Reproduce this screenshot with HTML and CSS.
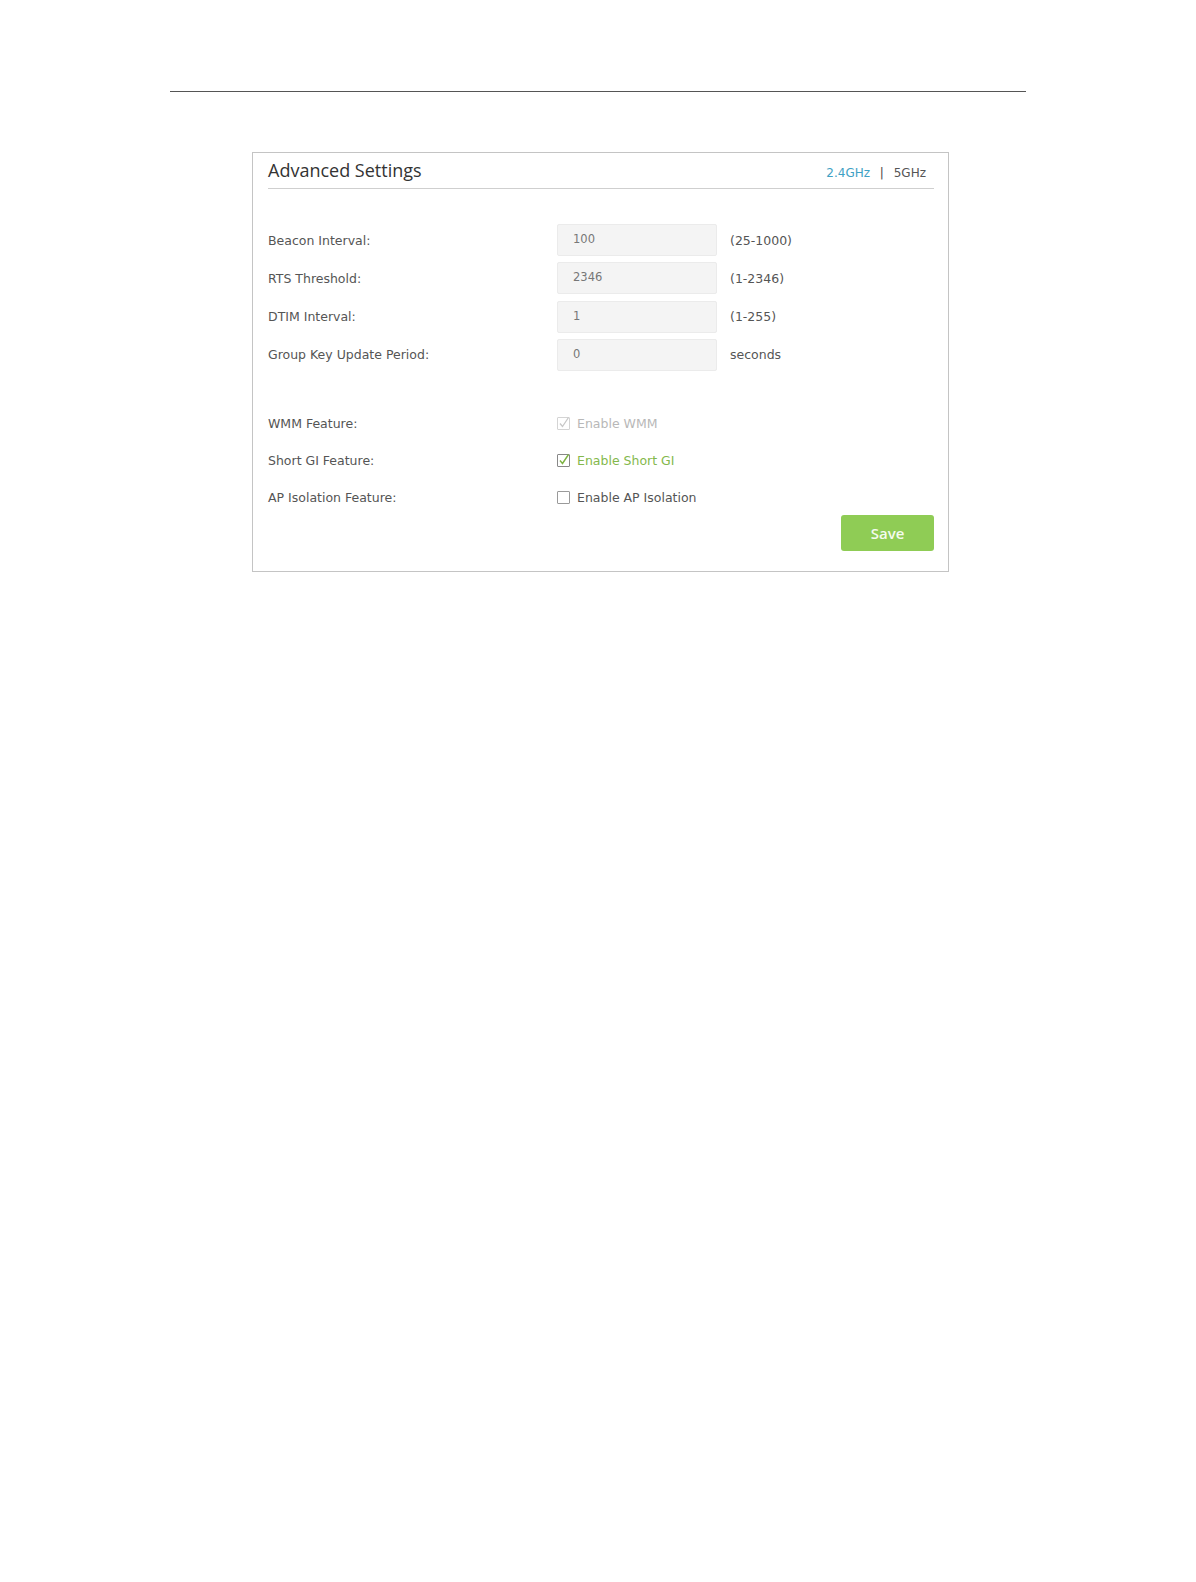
FILE: index.html
```html
<!DOCTYPE html>
<html lang="en">
<head>
    <meta charset="UTF-8">
    <meta name="viewport" content="width=device-width, initial-scale=1.0">
    <title>Advanced Settings</title>
    <link rel="stylesheet" href="styles.css">
</head>
<body>
    <div class="top-rule"></div>

    <div class="panel">
        <div class="panel-head">
            <h2 class="title">Advanced Settings</h2>
            <div class="bands">
                <span class="band active">2.4GHz</span>
                <span class="sep">|</span>
                <span class="band">5GHz</span>
            </div>
        </div>

        <div class="fields">
            <div class="row">
                <label class="label" for="beacon">Beacon Interval:</label>
                <input class="text-input" id="beacon" type="text" value="100">
                <span class="hint">(25-1000)</span>
            </div>
            <div class="row">
                <label class="label" for="rts">RTS Threshold:</label>
                <input class="text-input" id="rts" type="text" value="2346">
                <span class="hint">(1-2346)</span>
            </div>
            <div class="row">
                <label class="label" for="dtim">DTIM Interval:</label>
                <input class="text-input" id="dtim" type="text" value="1">
                <span class="hint">(1-255)</span>
            </div>
            <div class="row">
                <label class="label" for="gkup">Group Key Update Period:</label>
                <input class="text-input" id="gkup" type="text" value="0">
                <span class="hint">seconds</span>
            </div>
        </div>

        <div class="features">
            <div class="check-row">
                <span class="label">WMM Feature:</span>
                <span class="check disabled">
                    <span class="box">
                        <svg viewBox="0 0 13 13" width="13" height="13"><path d="M3 6.5 L5.5 9.5 L11.5 0.5" fill="none" stroke="#c8c8c8" stroke-width="1.3"/></svg>
                    </span>
                    Enable WMM
                </span>
            </div>
            <div class="check-row">
                <span class="label">Short GI Feature:</span>
                <span class="check checked">
                    <span class="box">
                        <svg viewBox="0 0 13 13" width="13" height="13"><path d="M3 6.5 L5.5 9.5 L11.5 0.5" fill="none" stroke="#7db343" stroke-width="1.4"/></svg>
                    </span>
                    Enable Short GI
                </span>
            </div>
            <div class="check-row">
                <span class="label">AP Isolation Feature:</span>
                <span class="check">
                    <span class="box"></span>
                    Enable AP Isolation
                </span>
            </div>
        </div>

        <div class="actions">
            <button class="save-btn">Save</button>
        </div>
    </div>
</body>
</html>
```

FILE: styles.css
```css
body {
    margin: 0;
    background-color: #ffffff;
    font-family: "DejaVu Sans", Verdana, sans-serif;
    color: #555;
}
.top-rule {
    margin: 91px 0 0 170px;
    width: 856px;
    border-top: 1px solid #555;
}
.panel {
    box-sizing: border-box;
    width: 697px;
    height: 420px;
    margin: 60px 0 0 252px;
    padding: 0 14px 0 15px;
    border: 1px solid #c4c4c4;
}
.panel-head {
    display: flex;
    justify-content: space-between;
    align-items: baseline;
    height: 35px;
    border-bottom: 1px solid #cfcfcf;
}
.title {
    margin: 0;
    padding-top: 4px;
    font-family: "Open Sans", sans-serif;
    font-size: 18px;
    font-weight: normal;
    line-height: 26px;
    color: #333;
}
.bands {
    padding-right: 8px;
    font-size: 12px;
    color: #555;
}
.band.active {
    color: #3fa1c4;
}
.sep {
    margin: 0 6px;
    color: #444;
}
.fields {
    display: flex;
    flex-direction: column;
    gap: 6.3px;
    margin-top: 35px;
}
.row, .check-row {
    display: flex;
    align-items: center;
}
.label {
    width: 289px;
    font-size: 12.5px;
    color: #555;
}
.text-input {
    box-sizing: border-box;
    width: 160px;
    height: 32px;
    padding: 0 0 2px 15px;
    border: 1px solid #ebebeb;
    border-radius: 2px;
    background-color: #f4f4f4;
    font-family: "DejaVu Sans", sans-serif;
    font-size: 11.5px;
    color: #777;
    outline: none;
}
.hint {
    margin-left: 13px;
    font-size: 12.5px;
    color: #555;
}
.features {
    display: flex;
    flex-direction: column;
    gap: 17px;
    margin-top: 43px;
}
.check-row {
    height: 20px;
}
.check {
    display: flex;
    align-items: center;
    gap: 7px;
    font-size: 12.5px;
    color: #555;
}
.box {
    box-sizing: border-box;
    position: relative;
    width: 13px;
    height: 13px;
    border: 1px solid #9a9a9a;
    border-radius: 1px;
    background: #fff;
}
.box svg {
    position: absolute;
    left: -1px;
    top: -1px;
}
.check.disabled {
    color: #b8b8b8;
}
.check.disabled .box {
    border-color: #d4d4d4;
}
.check.checked {
    color: #84b84c;
}
.check.checked .box {
    border-color: #888;
}
.actions {
    display: flex;
    justify-content: flex-end;
    margin-top: 7px;
}
.save-btn {
    width: 93px;
    height: 36px;
    border: none;
    border-radius: 3px;
    background-color: #8fcc55;
    font-family: "Open Sans", sans-serif;
    font-size: 15px;
    font-weight: 600;
    color: #f4fbee;
    cursor: pointer;
}
```
